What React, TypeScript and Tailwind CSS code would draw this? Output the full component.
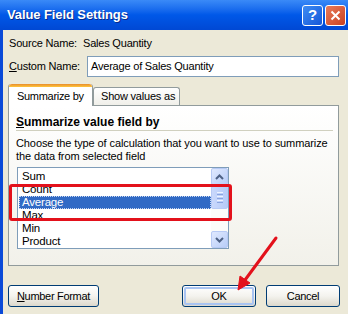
import React from "react";

const font = { fontFamily: '"Liberation Sans", Arial, sans-serif' };

const items = ["Sum", "Count", "Average", "Max", "Min", "Product"];

const XpButton: React.FC<{ width: string; isDefault?: boolean; children: React.ReactNode }> = ({
  width,
  isDefault,
  children,
}) => (
  <button
    type="button"
    className={`${width} h-[22px] rounded-[3px] border border-[#003c74] bg-gradient-to-b from-white via-[#f4f3ee] to-[#dcd8cc] p-px`}
  >
    <span
      className={`${
        isDefault ? "border-[#a9c4f2] border-2" : "border-transparent border"
      } flex h-full w-full items-center justify-center rounded-[2px] text-[11px] tracking-[-0.3px] text-black`}
    >
      {children}
    </span>
  </button>
);

const ScrollArrow: React.FC<{ down?: boolean }> = ({ down }) => (
  <div className="flex h-[17px] w-[17px] items-center justify-center rounded-[2px] border border-[#b7caf5] bg-gradient-to-br from-[#e0e9fe] to-[#b8cdf8]">
    <svg width="9" height="6" viewBox="0 0 9 6">
      <path
        d={down ? "M1 1 L4.5 4.5 L8 1" : "M1 5 L4.5 1.5 L8 5"}
        stroke="#4d6185"
        strokeWidth="2"
        fill="none"
      />
    </svg>
  </div>
);

export default function App() {
  return (
    <div className="relative h-[314px] w-[348px] overflow-hidden bg-[#0a4ad8] text-black" style={font}>
      {/* title bar */}
      <div className="flex h-[30px] items-center bg-gradient-to-b from-[#3a8af7] via-[#0058e8] to-[#0048d4] pl-[7px] pr-[2px]">
        <span className="text-[13px] font-bold tracking-[-0.1px] text-white [text-shadow:1px_1px_0_#0a2a8a]">
          Value Field Settings
        </span>
        <div className="ml-auto flex gap-[2px]">
          <div className="flex h-[21px] w-[21px] items-center justify-center rounded-[3px] border border-white bg-gradient-to-br from-[#3f8cf3] to-[#1656d8] text-[15px] font-bold text-white">
            ?
          </div>
          <div className="flex h-[21px] w-[21px] items-center justify-center rounded-[3px] border border-white bg-gradient-to-br from-[#e97b5a] to-[#c8401f]">
            <svg width="11" height="11" viewBox="0 0 11 11">
              <path d="M1.5 1.5 L9.5 9.5 M9.5 1.5 L1.5 9.5" stroke="white" strokeWidth="2" />
            </svg>
          </div>
        </div>
      </div>

      {/* body */}
      <div className="ml-[3px] h-[284px] bg-[#ece9d8] pl-[5px] pt-[6px] text-[11px] tracking-[-0.2px]">
        <div className="flex h-[14px] items-center pl-[1px]">
          <span className="w-[74px]">Source Name:</span>
          <span>Sales Quantity</span>
        </div>

        <div className="mt-[6px] flex h-[21px] items-center pl-[1px]">
          <span className="w-[78px]">
            <span className="underline">C</span>ustom Name:
          </span>
          <div className="flex h-[21px] w-[252px] items-center border border-[#7f9db9] bg-white pl-[3px]">
            Average of Sales Quantity
          </div>
        </div>

        {/* tabs */}
        <div className="mt-[7px] flex items-end">
          <div className="relative z-10 -mb-px flex h-[22px] w-[85px] flex-col rounded-t-[3px] border-x border-[#919b9c] bg-white">
            <div className="h-[3px] rounded-t-[3px] bg-gradient-to-b from-[#e68b2c] to-[#ffc73c]" />
            <div className="flex flex-1 items-center pl-[8px] tracking-[-0.3px]">Summarize by</div>
          </div>
          <div className="flex h-[18px] w-[87px] items-center rounded-t-[3px] border-x border-t border-[#919b9c] bg-gradient-to-b from-white to-[#f0efe9] pl-[7px]">
            Show values as
          </div>
        </div>

        <div className="h-[161px] w-[331px] border border-[#919b9c] bg-gradient-to-b from-white to-[#f2f1ea] pl-[7px] pr-[5px] pt-[9px]">
          <div className="flex h-[14px] items-center text-[12px] font-bold tracking-[0px]">
            <span className="underline">S</span>ummarize value field by
          </div>
          <div className="mt-px h-px bg-[#d0d0bf]" />
          <div className="mt-[6px] whitespace-nowrap leading-[13px] tracking-[-0.1px]">
            Choose the type of calculation that you want to use to summarize
            <br />
            the data from selected field
          </div>

          {/* list box */}
          <div className="ml-px mt-[4px] flex h-[82px] w-[212px] border border-[#7f9db9] bg-white">
            <div className="flex-1 pl-px pt-[2px]">
              {items.map((item) => (
                <div
                  key={item}
                  className={`${
                    item === "Average"
                      ? "border border-dotted border-[#c7d6f0] bg-[#316ac5] text-white"
                      : "border border-transparent"
                  } flex h-[13px] items-center pl-[2px] text-[11.5px] leading-[13px]`}
                >
                  {item}
                </div>
              ))}
            </div>
            <div className="flex w-[17px] flex-col bg-[#fcfcf9]">
              <ScrollArrow />
              <div className="flex flex-1 flex-col pt-[1px]">
                <div className="flex h-[23px] flex-col items-center justify-center gap-[1px] rounded-[2px] border border-[#b7caf5] bg-gradient-to-r from-[#c9d8fc] to-[#b6cbf7]">
                  <div className="h-px w-[6px] bg-[#eef3fe]" />
                  <div className="h-px w-[6px] bg-[#8aa4e0]" />
                  <div className="h-px w-[6px] bg-[#eef3fe]" />
                  <div className="h-px w-[6px] bg-[#8aa4e0]" />
                  <div className="h-px w-[6px] bg-[#eef3fe]" />
                  <div className="h-px w-[6px] bg-[#8aa4e0]" />
                </div>
              </div>
              <ScrollArrow down />
            </div>
          </div>
        </div>

        {/* buttons */}
        <div className="mt-[19px] flex w-[332px]">
          <XpButton width="w-[91px]">
            <span className="underline">N</span>umber Format
          </XpButton>
          <div className="ml-auto flex gap-[10px]">
            <XpButton width="w-[74px]" isDefault>
              OK
            </XpButton>
            <XpButton width="w-[74px]">Cancel</XpButton>
          </div>
        </div>
      </div>

      {/* annotation overlays */}
      <div className="pointer-events-none absolute left-[9px] top-[184px] h-[37px] w-[223px] rounded-[3px] border-[3px] border-[#e3111b]" />
      <svg className="pointer-events-none absolute left-0 top-0" width="348" height="314" viewBox="0 0 348 314">
        <line x1="276" y1="238" x2="245" y2="280" stroke="#e3111b" strokeWidth="3" strokeLinecap="round" />
        <path d="M238 290 L240 276 L250 283 Z" fill="#e3111b" stroke="#e3111b" strokeWidth="1" strokeLinejoin="round" />
      </svg>
    </div>
  );
}
